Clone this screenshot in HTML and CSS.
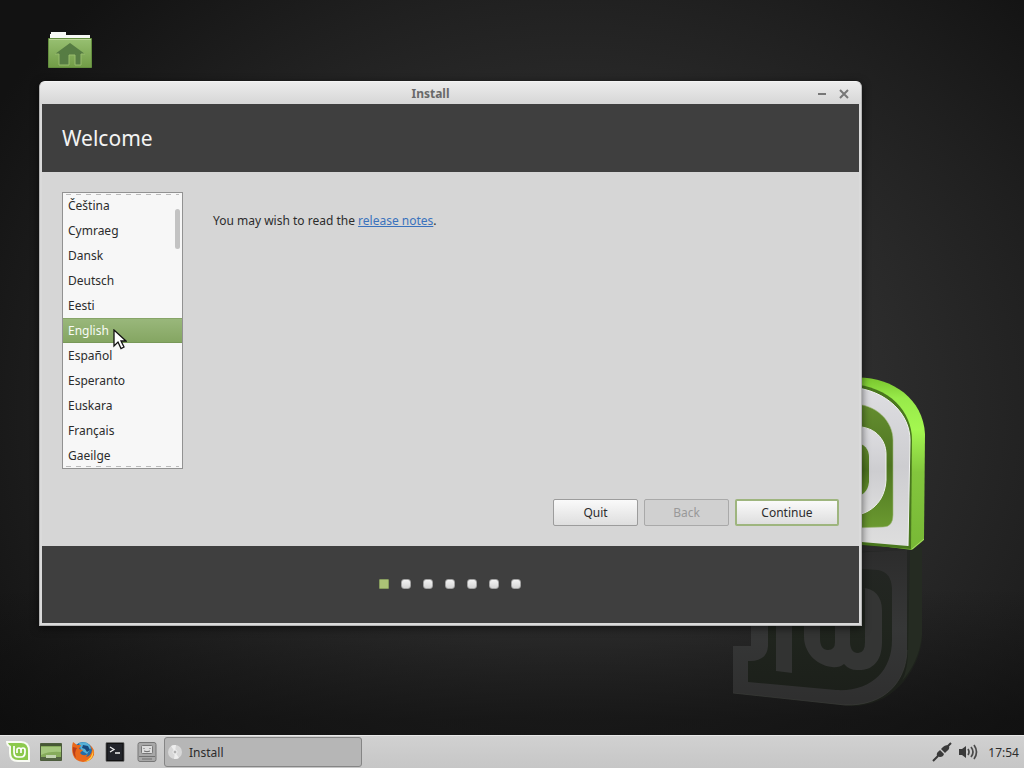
FILE: index.html
```html
<!DOCTYPE html>
<html lang="en">
<head>
<meta charset="utf-8">
<meta name="viewport" content="width=device-width, initial-scale=1">
<title>Install</title>
<link rel="stylesheet" href="styles.css">
</head>
<body>
<div class="screen">
  <main class="desktop">
    <svg class="emblem" viewBox="700 360 260 370" aria-hidden="true">
      <defs>
        <linearGradient id="side" x1="0" y1="0" x2="0" y2="1">
          <stop offset="0" stop-color="#79c52d"/><stop offset=".12" stop-color="#98ea4a"/><stop offset=".3" stop-color="#a4f750"/><stop offset=".55" stop-color="#83c63d"/><stop offset="1" stop-color="#78b836"/>
        </linearGradient>
        <linearGradient id="face" x1="0" y1="0" x2="0" y2="1">
          <stop offset="0" stop-color="#dedee2"/><stop offset=".5" stop-color="#cdcdd0"/><stop offset="1" stop-color="#dedede"/>
        </linearGradient>
        <linearGradient id="well" x1="0" y1="0" x2="0" y2="1">
          <stop offset="0" stop-color="#658e30"/><stop offset=".5" stop-color="#4d7420"/><stop offset="1" stop-color="#6b9a30"/>
        </linearGradient>
        <linearGradient id="mirror" x1="0" y1="548" x2="0" y2="708" gradientUnits="userSpaceOnUse">
          <stop offset="0" stop-color="#2c2c2c"/><stop offset=".5" stop-color="#363737"/><stop offset="1" stop-color="#2e2e2e"/>
        </linearGradient>
        <linearGradient id="shade" x1="0" y1="548" x2="0" y2="708" gradientUnits="userSpaceOnUse">
          <stop offset="0" stop-color="#242624"/><stop offset=".5" stop-color="#20251e"/><stop offset="1" stop-color="#1b1e19"/>
        </linearGradient>
      </defs>
      <path d="M850 378C887 374 923 396 925 434L924 540L912 550L850 542Z" fill="url(#side)"/>
      <path d="M850 384C890 386 912 412 912 440L911 549L850 544Z" fill="#49771d"/>
      <path d="M912 549L924 539" fill="none" stroke="#a7db62"/>
      <path d="M850 387C888 390 910 415 910 440L908 546L850 541Z" fill="url(#face)"/>
      <path d="M850 387C888 390 910 415 910 440L908 546" fill="none" stroke="#f2f2f3"/>
      <path d="M850 404C877 403 893 422 893 440V515Q893 527 883 527L850 528Z" fill="url(#well)" stroke="#a0b77b" stroke-width=".6"/>
      <path d="M850 427C875 424 886 440 886 454V480C885 502 870 515 850 516Z" fill="url(#face)" stroke="#f0f1ef"/>
      <path d="M850 443C864 441 869 449 869 457V482C868 491 863 497 850 498Z" fill="url(#well)"/>
      <path d="M850 552L912 550L922 545V640C917 675 890 707 850 706L733 693V646H751V626H850Z" fill="url(#shade)"/>
      <path d="M910 551L922 546V635Q919 662 902 681Q908 669 908 650Z" fill="#252b22"/>
      <path d="M850 553L907 550V650C906 682 885 706 845 705L733 693V646H751V626H768V646Q767 661 750 661H748V682L836 690C871 692 892 671 892 640V588Q891 572 878 570L850 568Z" fill="url(#mirror)"/>
      <path d="M733 693L845 705C885 706 906 682 907 650" fill="none" stroke="#3b3c3a" stroke-width=".7"/>
      <path d="M776 626H792V673L776 671Z" fill="#323332"/>
      <path d="M804 626H820V638Q820 650 828 650Q835 650 835 642V626H850V641Q850 653 858 653Q865 653 865 642V588H862C874 588 882 596 882 610V642C882 665 869 671 857 670Q849 670 844 664Q839 668 832 667C814 665 804 650 804 637Z" fill="#343534"/>
    </svg>

    <a class="home" href="#home" aria-label="Home folder">
      <svg viewBox="0 0 46 38" aria-hidden="true">
        <defs><linearGradient id="folder" x1="0" y1="0" x2="0" y2="1"><stop offset="0" stop-color="#98c072"/><stop offset="1" stop-color="#719c46"/></linearGradient></defs>
        <path d="M3 8V3H4V1H19V4H43V8Z" fill="#f7f9f5"/>
        <path d="M1.500 7.500H44.500V36.500H1.500Z" fill="url(#folder)" stroke="#638d3e"/>
        <path d="M2 8.500H44" stroke="#bad596"/>
        <path d="M23 12L38 23H34V34H28V24H22V34H12V23H8Z" fill="#567c43"/>
        <path d="M8 23H12V34H22V24H28V34H34V23H38" fill="none" stroke="#98bc6c"/>
      </svg>
    </a>

    <section class="window" aria-label="Install">
      <div class="titlebar">
        <h1 class="window-title">Install</h1>
        <div class="window-controls">
          <button class="control" type="button" aria-label="Minimize"><svg viewBox="0 0 10 10"><path d="M1 5H9" stroke="#777" stroke-width="2"/></svg></button>
          <button class="control" type="button" aria-label="Close"><svg viewBox="0 0 10 10"><path d="M1 1L9 9M9 1L1 9" stroke="#777" stroke-width="2"/></svg></button>
        </div>
      </div>
      <header class="banner"><h2 class="heading">Welcome</h2></header>
      <div class="content">
        <div class="choices">
          <div class="language-box">
            <select class="languages" size="11" aria-label="Language">
              <option>Čeština</option>
              <option>Cymraeg</option>
              <option>Dansk</option>
              <option>Deutsch</option>
              <option>Eesti</option>
              <option selected>English</option>
              <option>Español</option>
              <option>Esperanto</option>
              <option>Euskara</option>
              <option>Français</option>
              <option>Gaeilge</option>
            </select>
            <span class="scroll-thumb"></span>
          </div>
          <p class="notes">You may wish to read the <a href="#notes">release notes</a>.</p>
        </div>
        <div class="actions">
          <button class="button" type="button">Quit</button>
          <button class="button" type="button" disabled>Back</button>
          <button class="button button-primary" type="button">Continue</button>
        </div>
      </div>
      <footer class="steps">
        <span class="step step-current"></span><span class="step"></span><span class="step"></span><span class="step"></span><span class="step"></span><span class="step"></span><span class="step"></span>
      </footer>
    </section>

    <svg class="cursor" viewBox="0 0 14 22" aria-hidden="true"><path d="M1 1V17L5 13L8 19.500L11 18L8 12H13Z" fill="#fff" stroke="#111" stroke-width="1.300"/></svg>
  </main>

  <nav class="taskbar" aria-label="Taskbar">
    <button class="launcher" type="button" aria-label="Menu">
      <svg viewBox="0 0 26 24"><path d="M0 1H15Q24 1 24 11V22H12Q3 22 3 13V7Q0 6 0 1Z" fill="#f8fbf3"/><path d="M2 3H15Q22 3 22 11V20H12Q5 20 5 13V6Q3 6 2 3Z" fill="#8cc94d"/><path d="M8 6V12Q8 17 12 17H15Q19 17 19 12V10Q19 8 17 8Q15 8 15 10V13M15 10Q15 8 13 8Q11 8 11 10V13" fill="none" stroke="#fff" stroke-width="1.700"/></svg>
    </button>
    <button class="launcher" type="button" aria-label="Show desktop">
      <svg viewBox="0 0 26 24"><path d="M2.500 3.500H23.500V20.500H2.500Z" fill="#86ab5b" stroke="#4c5c3c"/><path d="M3 4H23V6H3Z" fill="#465835"/><path d="M3 7H23V12Q11 11 3 15Z" fill="#a4c77c"/><path d="M3 17H23V20H3Z" fill="#536442"/><path d="M8 15H18V18H8Z" fill="#c2d3af"/></svg>
    </button>
    <button class="launcher" type="button" aria-label="Firefox">
      <svg viewBox="0 0 26 24"><circle cx="13" cy="11.500" r="9.500" fill="#236da9"/><path d="M9 3Q18 0 21 8L17 14L11 10Z" fill="#56b0d7"/><path d="M3 2L7 5L11 5L9 9L13 10L10 13Q13 17 18 14L16 17Q21 16 22 10L20 5Q25 9 24 15Q21 22 13 22Q5 21 3 15Q1 8 3 2Z" fill="#e9681b"/><path d="M23 9Q25 20 14 22Q23 18 23 9Z" fill="#ffcf3d"/><path d="M3 7Q2 14 6 18Q4 12 7 8Z" fill="#b93e1b"/><path d="M13 5L18 6L20 10L17 12L15 9L12 8Z" fill="#17497f"/></svg>
    </button>
    <button class="launcher" type="button" aria-label="Terminal">
      <svg viewBox="0 0 26 24"><rect x="4" y="2.500" width="18" height="19" rx="1" fill="#22242a" stroke="#777"/><rect x="5" y="3.500" width="16" height="17" fill="none" stroke="#111"/><path d="M8 7L12 9.500L8 12M13 13H18" fill="none" stroke="#eee" stroke-width="1.300"/></svg>
    </button>
    <button class="launcher" type="button" aria-label="Files">
      <svg viewBox="0 0 26 24"><rect x="4" y="2.500" width="18" height="19" rx="2" fill="#a8a8a8" stroke="#777"/><rect x="7.500" y="5.500" width="11" height="8" rx="1" fill="#ddd" stroke="#777"/><path d="M10 8V9M16 8V9M10 11Q13 12.500 16 11" fill="none" stroke="#666"/><path d="M5 16.500H21M8 19H18" stroke="#717171"/></svg>
    </button>
    <button class="task" type="button">
      <svg viewBox="0 0 16 16" aria-hidden="true"><circle cx="8" cy="8" r="7" fill="#d8d8d8"/><path d="M8 8L4 2A7 7 0 0 1 9 1ZM8 8L12 14A7 7 0 0 1 7 15Z" fill="#eee"/><circle cx="8" cy="8" r="2" fill="#b1b1b1" stroke="#f2f2f2"/></svg>
      Install
    </button>
    <div class="tray">
      <svg class="tray-icon" viewBox="0 0 20 20" role="img" aria-label="Network"><path d="M1 19L6 14M15 5L19 1" stroke="#3a3a3a" stroke-width="2"/><path d="M5 14Q4 11 7 9L8 8L12 12L11 14Q8 16 5 14Z" fill="#3a3a3a"/><path d="M9 7L11 5Q14 2 17 4Q18 7 15 9L13 11Z" fill="#3a3a3a"/></svg>
      <svg class="tray-icon" viewBox="0 0 20 20" role="img" aria-label="Volume"><path d="M1 7H4L8 4V16L4 13H1Z" fill="#3a3a3a"/><path d="M10 7Q12 10 10 13M13 5Q17 10 13 15M16 3Q21 10 16 17" fill="none" stroke="#4a4a4a" stroke-width="1.700"/></svg>
      <time class="clock" datetime="17:54">17:54</time>
    </div>
  </nav>
</div>
</body>
</html>
```

FILE: styles.css
```css
* { box-sizing: border-box; }

body {
  margin: 0;
  font: 12px/17px "Noto Sans", sans-serif;
  color: #2c2c2c;
}

button, select { font: inherit; color: inherit; }
h1, h2, p { margin: 0; }
svg { display: block; }

.screen {
  display: flex;
  flex-direction: column;
  min-height: 100vh;
}

/* Desktop */
.desktop {
  position: relative;
  flex: 1;
  overflow: hidden;
  background:
    linear-gradient(to bottom, transparent 80%, rgba(12, 12, 12, .6) 98%),
    radial-gradient(ellipse 66% 80% at 56% 56%, #343434 0%, #2f2f2f 40%, #202020 72%, #121212 100%);
}

.emblem {
  position: absolute;
  left: 700px;
  top: 360px;
  width: 260px;
}

.home {
  position: absolute;
  left: 47px;
  top: 31px;
  width: 46px;
}

.cursor {
  position: absolute;
  left: 113px;
  top: 329px;
  width: 14px;
  pointer-events: none;
}

/* Installer window */
.window {
  position: absolute;
  left: 39px;
  top: 81px;
  right: 162px;
  padding: 0 2px 2px;
  border: 1px solid #b4b4b4;
  border-top-color: #f4f4f4;
  border-radius: 6px 6px 0 0;
  background: #dadada;
  box-shadow: 0 2px 8px rgba(0, 0, 0, .6);
}

.titlebar {
  display: grid;
  grid-template-columns: 40px 1fr 40px;
  align-items: center;
  height: 22px;
  margin: 0 -2px;
  border-radius: 5px 5px 0 0;
  background: linear-gradient(#ececec, #d6d6d6);
}

.window-title {
  grid-column: 2;
  padding-right: 40px;
  text-align: center;
  font-size: 12px;
  line-height: 24px;
  color: #696969;
}

.window-controls {
  grid-column: 3;
  display: flex;
  justify-content: flex-end;
  gap: 12px;
  padding-right: 12px;
}

.control {
  flex: none;
  width: 10px;
  padding: 0;
  border: 0;
  background: none;
}

.banner {
  padding: 18px 20px;
  background: #3f3f3f;
}

.heading {
  font-size: 21px;
  font-weight: 400;
  line-height: 32px;
  color: #f3f3f3;
}

.content {
  padding: 20px;
  background: #d6d6d6;
}

.choices {
  display: flex;
  gap: 30px;
}

.language-box {
  position: relative;
  flex: none;
  width: 121px;
}

.language-box::before,
.language-box::after {
  content: "";
  position: absolute;
  left: 4px;
  right: 4px;
  height: 1px;
  background: repeating-linear-gradient(to right, #bbb 0 5px, transparent 5px 10px);
}

.language-box::before { top: 2px; }
.language-box::after { bottom: 2px; }

.languages {
  display: block;
  width: 100%;
  height: 277px;
  padding: 0;
  overflow: hidden;
  border: 1px solid #929292;
  border-radius: 0;
  outline: 0;
  background: #f7f7f7;
}

.languages option {
  height: 25px;
  min-height: 25px;
  padding: 4px 5px;
  line-height: 17px;
}

.languages option:checked {
  background: linear-gradient(#9ab87c, #84a561);
  box-shadow: inset 0 1px #87a568, inset 0 -1px #789858;
  -webkit-text-fill-color: #f8fbf5;
}

.scroll-thumb {
  position: absolute;
  top: 17px;
  right: 3px;
  width: 5px;
  height: 40px;
  border-radius: 3px;
  background: #c3c3c3;
}

.notes { padding-top: 20px; }
.notes a { color: #3a72bd; }

.actions {
  display: flex;
  justify-content: flex-end;
  gap: 6px;
  margin-top: 30px;
}

.button {
  width: 85px;
  height: 27px;
  padding: 0;
  border: 1px solid #9c9c9c;
  border-radius: 2px;
  background: linear-gradient(#fafafa, #dedede);
}

.button:disabled {
  border-color: #a9a9a9;
  background: #d0d0d0;
  color: #999;
}

.button-primary {
  width: 104px;
  border: 2px solid #9eb57e;
}

.steps {
  display: flex;
  justify-content: center;
  gap: 12px;
  padding: 33px 2px 34px 0;
  background: #3f3f3f;
}

.step {
  width: 10px;
  height: 10px;
  border: 1px solid #a2a2a2;
  border-radius: 3px;
  background: linear-gradient(#f3f3f3, #d5d5d5);
}

.step-current {
  border-color: #869b5d;
  border-radius: 1px;
  background: #abc276;
}

/* Taskbar */
.taskbar {
  display: flex;
  align-items: center;
  height: 33px;
  padding: 0 5px 0 6px;
  border-top: 1px solid #e8e8e8;
  background: linear-gradient(#d1d1d1, #c6c6c6);
}

.launcher {
  width: 26px;
  margin-right: 6px;
  padding: 0;
  border: 0;
  background: none;
}

.task {
  display: flex;
  align-items: center;
  gap: 6px;
  width: 198px;
  height: 30px;
  margin-left: -2px;
  padding: 0 2px;
  border: 1px solid #858585;
  border-radius: 3px;
  background: #b6b6b6;
  text-align: left;
}

.task svg { width: 16px; }

.tray {
  display: flex;
  align-items: center;
  gap: 6px;
  margin-left: auto;
}

.tray-icon { width: 20px; }
.clock { padding-left: 4px; }
```
